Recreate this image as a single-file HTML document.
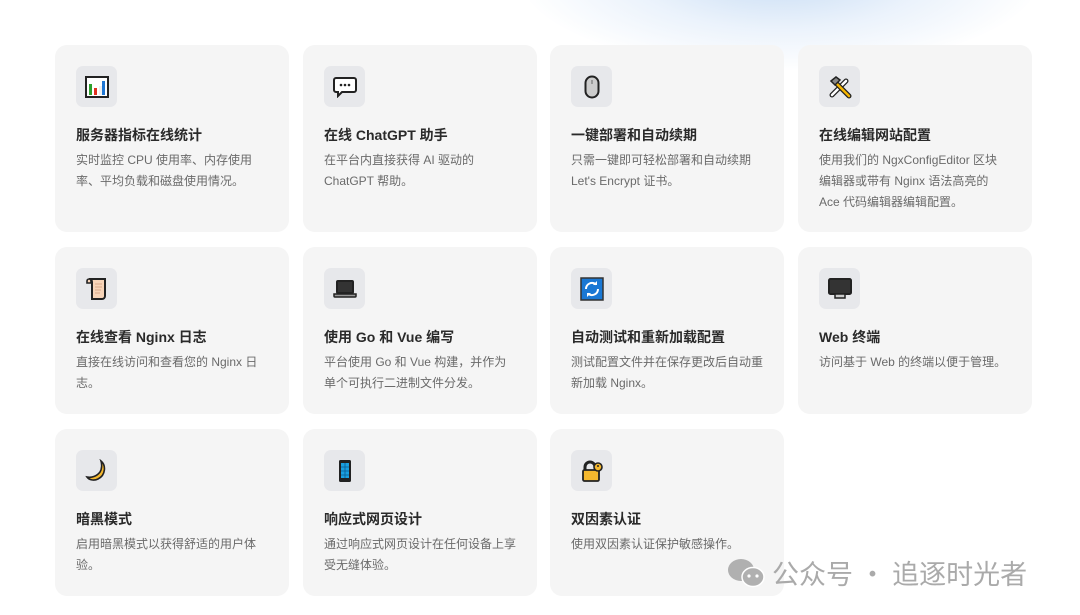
<!DOCTYPE html>
<html><head><meta charset="utf-8"><style>
*{margin:0;padding:0;box-sizing:border-box}
body{width:1080px;height:615px;overflow:hidden;background:#fff;position:relative;font-family:"Liberation Sans","Noto Sans CJK SC",sans-serif}
.glow{position:absolute;left:520px;top:-120px;width:520px;height:190px;border-radius:50%;background:radial-gradient(ellipse at 50% 50%,rgba(180,208,240,.75) 0%,rgba(215,230,248,.5) 40%,rgba(255,255,255,0) 72%)}
.c{position:absolute;width:234px;background:#f5f5f5;border-radius:12px}
.ic{position:absolute;left:21px;top:21px;width:41px;height:41px;background:#e7e8eb;border-radius:7px;display:flex;align-items:center;justify-content:center}
.t{position:absolute;left:21px;top:80px;font-size:14px;font-weight:bold;color:#2a2a2a;white-space:nowrap}
.d{position:absolute;left:21px;top:105px;font-size:12px;line-height:21px;color:#6a6a6a;white-space:nowrap}
.wm{position:absolute;left:726px;top:553px;font-size:27px;color:#aaa;font-family:"Noto Sans CJK SC",sans-serif;white-space:nowrap;display:flex;align-items:center;gap:6px}
</style></head><body>
<div class="glow"></div>

<div class="c" style="left:55px;top:45px;height:187px"><div class="ic"><svg width="24" height="22" viewBox="0 0 24 22"><rect x="1" y="1" width="22" height="20" fill="#fff" stroke="#222" stroke-width="2"/><rect x="4" y="8" width="3" height="11" fill="#2ca02c"/><rect x="9" y="12" width="3" height="7" fill="#e03020"/><rect x="14" y="10" width="3" height="9" fill="#f0f0f0"/><rect x="17" y="5" width="3" height="14" fill="#1f77d4"/></svg></div><div class="t">服务器指标在线统计</div><div class="d">实时监控 CPU 使用率、内存使用<br>率、平均负载和磁盘使用情况。</div></div>

<div class="c" style="left:303px;top:45px;height:187px"><div class="ic"><svg width="24" height="22" viewBox="0 0 24 22"><path d="M3 2h18a2 2 0 0 1 2 2v10a2 2 0 0 1-2 2H9l-4 4v-4H3a2 2 0 0 1-2-2V4a2 2 0 0 1 2-2z" fill="#fff" stroke="#222" stroke-width="2"/><circle cx="8" cy="9" r="1.3" fill="#222"/><circle cx="12" cy="9" r="1.3" fill="#222"/><circle cx="16" cy="9" r="1.3" fill="#222"/></svg></div><div class="t">在线 ChatGPT 助手</div><div class="d">在平台内直接获得 AI 驱动的<br>ChatGPT 帮助。</div></div>

<div class="c" style="left:550px;top:45px;height:187px"><div class="ic"><svg width="16" height="24" viewBox="0 0 16 24"><rect x="1.5" y="1.5" width="13" height="21" rx="6.5" fill="#ccc" stroke="#222" stroke-width="2"/><line x1="8" y1="5" x2="8" y2="9" stroke="#888" stroke-width="1.5"/></svg></div><div class="t">一键部署和自动续期</div><div class="d">只需一键即可轻松部署和自动续期<br>Let's Encrypt 证书。</div></div>

<div class="c" style="left:798px;top:45px;height:187px"><div class="ic"><svg width="24" height="24" viewBox="0 0 24 24"><path d="M4 20L18 6" stroke="#222" stroke-width="5" stroke-linecap="round"/><path d="M4 20L18 6" stroke="#fff" stroke-width="2.5" stroke-linecap="round"/><path d="M8 8l13 13" stroke="#222" stroke-width="5" stroke-linecap="round"/><path d="M8 8l13 13" stroke="#f5b400" stroke-width="2.5" stroke-linecap="round"/><path d="M3 6l5-4 4 3-5 5z" fill="#888" stroke="#222" stroke-width="1.5"/></svg></div><div class="t">在线编辑网站配置</div><div class="d">使用我们的 NgxConfigEditor 区块<br>编辑器或带有 Nginx 语法高亮的<br>Ace 代码编辑器编辑配置。</div></div>

<div class="c" style="left:55px;top:247px;height:167px"><div class="ic"><svg width="24" height="24" viewBox="0 0 24 24"><path d="M5 2h15v17a3 3 0 0 1-3 3H7V5a3 3 0 0 0-3-3z" fill="#f7d4b8" stroke="#222" stroke-width="2"/><path d="M2 4a2 2 0 0 1 4 0v2H2z" fill="#f7d4b8" stroke="#222" stroke-width="1.6"/><path d="M10 7h7M10 10h7M10 13h6M10 16h5" stroke="#d8a888" stroke-width="1"/></svg></div><div class="t">在线查看 Nginx 日志</div><div class="d">直接在线访问和查看您的 Nginx 日<br>志。</div></div>

<div class="c" style="left:303px;top:247px;height:167px"><div class="ic"><svg width="24" height="20" viewBox="0 0 24 20"><rect x="4" y="2" width="16" height="12" rx="1" fill="#333" stroke="#222" stroke-width="2"/><path d="M1 15h22v2a1 1 0 0 1-1 1H2a1 1 0 0 1-1-1z" fill="#999" stroke="#222" stroke-width="1.5"/></svg></div><div class="t">使用 Go 和 Vue 编写</div><div class="d">平台使用 Go 和 Vue 构建，并作为<br>单个可执行二进制文件分发。</div></div>

<div class="c" style="left:550px;top:247px;height:167px"><div class="ic"><svg width="24" height="24" viewBox="0 0 24 24"><rect x="1" y="1" width="22" height="22" fill="#1a78d4" stroke="#333" stroke-width="1.5"/><path d="M6 12a6 6 0 0 1 10-4.5M18 12a6 6 0 0 1-10 4.5" fill="none" stroke="#fff" stroke-width="2"/><path d="M17 4v4h-4z M7 20v-4h4z" fill="#fff"/></svg></div><div class="t">自动测试和重新加载配置</div><div class="d">测试配置文件并在保存更改后自动重<br>新加载 Nginx。</div></div>

<div class="c" style="left:798px;top:247px;height:167px"><div class="ic"><svg width="24" height="22" viewBox="0 0 24 22"><rect x="1" y="1" width="22" height="15" rx="1.5" fill="#333" stroke="#222" stroke-width="2"/><rect x="7" y="16" width="10" height="4" fill="#ccc" stroke="#222" stroke-width="1.5"/></svg></div><div class="t">Web 终端</div><div class="d">访问基于 Web 的终端以便于管理。</div></div>

<div class="c" style="left:55px;top:429px;height:167px"><div class="ic"><svg width="24" height="24" viewBox="0 0 24 24"><path d="M16 2c5 4 5 14-3 18-4 2-9 1-11-2 5 1 10-1 13-5 2-3 2-8 1-11z" fill="#f5b82e" stroke="#222" stroke-width="1.6"/></svg></div><div class="t">暗黑模式</div><div class="d">启用暗黑模式以获得舒适的用户体<br>验。</div></div>

<div class="c" style="left:303px;top:429px;height:167px"><div class="ic"><svg width="14" height="24" viewBox="0 0 14 24"><rect x="1" y="1" width="12" height="22" rx="1.5" fill="#222"/><rect x="3" y="4" width="8" height="15" fill="#1aa0e0"/><path d="M3 8h8M3 12h8M3 16h8M7 4v15" stroke="#0b5c90" stroke-width=".8"/></svg></div><div class="t">响应式网页设计</div><div class="d">通过响应式网页设计在任何设备上享<br>受无缝体验。</div></div>

<div class="c" style="left:550px;top:429px;height:167px"><div class="ic"><svg width="24" height="24" viewBox="0 0 24 24"><path d="M5 12V8a5 5 0 0 1 10 0" fill="none" stroke="#222" stroke-width="3"/><rect x="3" y="11" width="16" height="11" rx="1.5" fill="#f5b82e" stroke="#222" stroke-width="1.8"/><circle cx="18" cy="8" r="4" fill="#f5b82e" stroke="#222" stroke-width="1.6"/><circle cx="18" cy="7" r="1" fill="#222"/></svg></div><div class="t">双因素认证</div><div class="d">使用双因素认证保护敏感操作。</div></div>

<div class="wm"><svg width="40" height="32" viewBox="0 0 40 32"><ellipse cx="15" cy="13" rx="13" ry="11" fill="#b0b0b0"/><ellipse cx="27" cy="20" rx="11" ry="9.5" fill="#b0b0b0" stroke="#fff" stroke-width="1.5"/><circle cx="23" cy="19" r="1.6" fill="#fff"/><circle cx="31" cy="19" r="1.6" fill="#fff"/></svg><span>公众号 · 追逐时光者</span></div>
</body></html>
